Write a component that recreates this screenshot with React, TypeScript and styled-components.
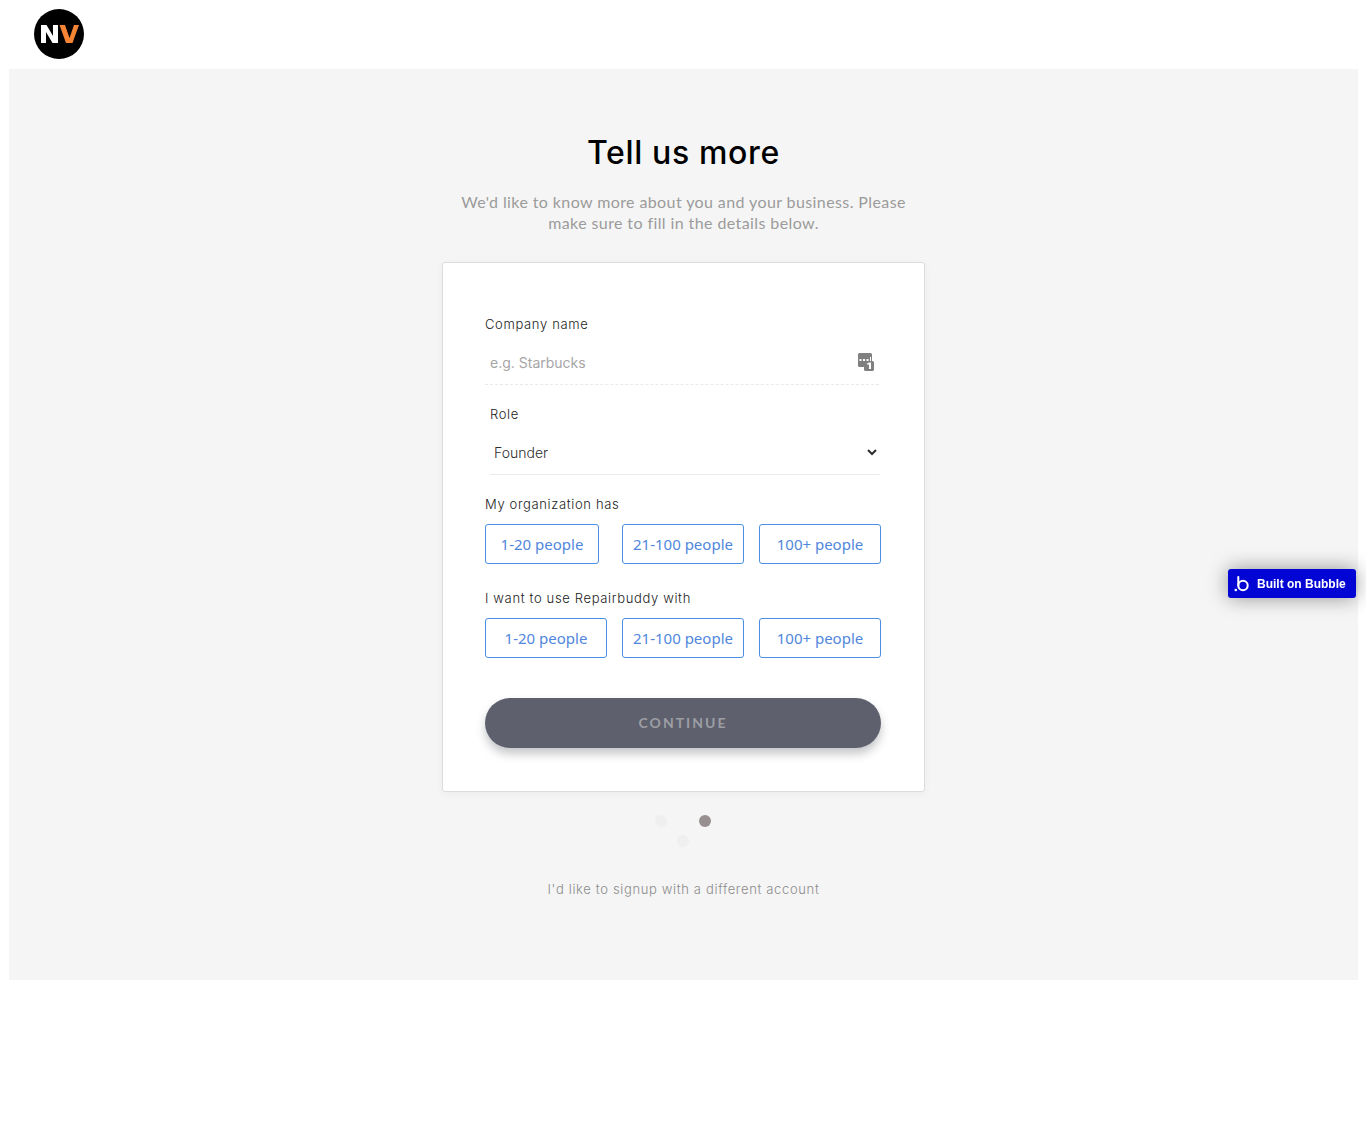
import React, { useState } from "react";
import styled, { createGlobalStyle } from "styled-components";

const GlobalStyle = createGlobalStyle`
  * { box-sizing: border-box; }
  body { margin: 0; background: #fff; font-family: Inter, "Liberation Sans", sans-serif; }
  button, input, select { font-family: inherit; }
`;

const Page = styled.div`
  padding: 0 8px 0 9px;
`;

const Header = styled.header`
  display: flex;
  align-items: flex-start;
  height: 69px;
  padding: 9px 25px;
`;

const HomeLink = styled.a`
  display: block;
  height: 50px;
`;

const Main = styled.main`
  display: flex;
  flex-direction: column;
  align-items: center;
  padding: 64px 16px 81px;
  background: #f5f5f5;
`;

const Title = styled.h1`
  margin: 0;
  font-size: 32px;
  line-height: 40px;
  font-weight: 500;
  letter-spacing: 0.02em;
  color: #000;
`;

const Intro = styled.p`
  width: 100%;
  max-width: 483px;
  margin: 18px 0 29px;
  padding: 0 12px;
  font-family: Lato, sans-serif;
  font-size: 16px;
  line-height: 21px;
  letter-spacing: 0.025em;
  text-align: center;
  color: #9b9b9b;
`;

const Card = styled.form`
  display: flex;
  flex-direction: column;
  width: 100%;
  max-width: 483px;
  padding: 51px 43px 43px 42px;
  background: #fff;
  border: 1px solid #dcdcdc;
  border-radius: 3px;
  box-shadow: 0 2px 10px rgba(0, 0, 0, 0.04);
`;

const Field = styled.div<{ $inset?: boolean }>`
  display: flex;
  flex-direction: column;
  height: 90px;
  padding-left: ${(p) => (p.$inset ? 5 : 0)}px;
  padding-right: ${(p) => (p.$inset ? 1 : 2)}px;
`;

const labelText = `
  font-size: 13px;
  line-height: 20px;
  font-weight: 300;
  letter-spacing: 0.05em;
  color: #1c1c1c;
`;

const Label = styled.label`
  ${labelText}
`;

const Control = styled.div<{ $dashed?: boolean }>`
  display: flex;
  align-items: center;
  height: 44px;
  margin-top: 7px;
  padding-right: ${(p) => (p.$dashed ? 5 : 0)}px;
  border-bottom: 1px ${(p) => (p.$dashed ? "dashed" : "solid")} #e9e9e9;
`;

const TextInput = styled.input`
  flex: 1;
  min-width: 0;
  height: 100%;
  padding: 0 5px;
  border: 0;
  outline: 0;
  background: transparent;
  font-size: 14px;
  color: #4a4a4a;
  &::placeholder { color: #a6a6a6; opacity: 1; }
`;

const Select = styled.select`
  width: 100%;
  height: 100%;
  padding: 0;
  border: 0;
  outline: 0;
  background: transparent;
  font-size: 14px;
  font-weight: 300;
  color: #2e2e2e;
`;

const Group = styled.fieldset`
  min-width: 0;
  height: 94px;
  margin: 0;
  padding: 0;
  border: 0;
`;

const Legend = styled.legend`
  padding: 0;
  ${labelText}
`;

const Choices = styled.div`
  display: grid;
  grid-template-columns: repeat(3, 1fr);
  gap: 15px;
  padding-top: 10px;
`;

const Choice = styled.button<{ $narrow?: boolean }>`
  height: 40px;
  margin-right: ${(p) => (p.$narrow ? 8 : 0)}px;
  padding: 0;
  border: 1px solid #4a8fe2;
  border-radius: 3px;
  background: #fff;
  color: #5087dc;
  font-family: "Noto Sans", sans-serif;
  font-size: 15px;
  white-space: nowrap;
  cursor: pointer;
`;

const Continue = styled.button`
  height: 50px;
  margin-top: 16px;
  padding: 0 0 2px;
  border: 0;
  border-radius: 25px;
  background: #5e606d;
  box-shadow: 0 6px 10px rgba(50, 55, 65, 0.28);
  color: #9c9ea4;
  font-family: Lato, sans-serif;
  font-size: 14px;
  font-weight: 700;
  letter-spacing: 2px;
`;

const Steps = styled.div`
  display: flex;
  align-items: flex-start;
  gap: 10px;
  margin-top: 23px;
  padding-right: 2px;
`;

const Step = styled.span<{ $active?: boolean; $low?: boolean }>`
  width: 12px;
  height: 12px;
  margin-top: ${(p) => (p.$low ? 20 : 0)}px;
  border-radius: 50%;
  background: ${(p) => (p.$active ? "#989090" : "#efefef")};
`;

const AccountLink = styled.a`
  margin-top: 32px;
  font-size: 13px;
  line-height: 20px;
  font-weight: 300;
  letter-spacing: 0.05em;
  text-decoration: none;
  color: #8c8c8c;
`;

const BubbleBadge = styled.a`
  position: fixed;
  top: 569px;
  right: 10px;
  display: flex;
  align-items: center;
  gap: 7px;
  width: 128px;
  height: 29px;
  padding-left: 6px;
  border-radius: 3px;
  background: #0205d3;
  box-shadow: 0 0 20px rgba(0, 0, 0, 0.4);
  color: #fff;
  font: bold 12px "Liberation Sans", sans-serif;
  text-decoration: none;
  white-space: nowrap;
`;

const Logo = () => (
  <svg width="50" height="50" viewBox="0 0 50 50" role="img" aria-label="NV">
    <circle cx="25" cy="25" r="25" fill="#000" />
    <path d="M7 34V16h5.500l6.500 11V16h5v18h-5.500L12 23v11z" fill="#fff" />
    <path d="M25.500 16h5.500l4.500 13L40 16h5l-6.500 18h-6.500z" fill="#f58435" />
  </svg>
);

const PasswordIcon = () => (
  <svg width="16" height="20" viewBox="0 0 16 20" aria-hidden="true">
    <path d="M1.500 0h11Q14 0 14 1.500V8h.500Q16 8 16 9.500v7q0 1.500-1.500 1.500h-7Q6 18 6 16.500V14H1.500Q0 14 0 12.500v-11Q0 0 1.500 0z" fill="#808080" />
    <path d="M1.500 6h2v2h-2zM5 6h2v2H5zM8.500 6h2v2h-2zM12 4h1v4h-1z" fill="#fff" />
    <path d="M9 11.500V10.500L11 9.500h2V16h-2v-4.500z" fill="#fff" />
  </svg>
);

const BubbleIcon = () => (
  <svg width="16" height="18" viewBox="0 0 16 18" aria-hidden="true">
    <circle cx="1.800" cy="15" r="1.300" fill="#fff" />
    <circle cx="9" cy="10.500" r="4.700" fill="none" stroke="#fff" strokeWidth="2" />
    <path d="M4.300 2v8.500" fill="none" stroke="#fff" strokeWidth="2" strokeLinecap="round" />
  </svg>
);

const sizes = ["1-20 people", "21-100 people", "100+ people"];

function SizeGroup({ title, compact }: { title: string; compact?: boolean }) {
  return (
    <Group>
      <Legend>{title}</Legend>
      <Choices>
        {sizes.map((size, i) => (
          <Choice key={size} type="button" $narrow={compact && i === 0}>
            {size}
          </Choice>
        ))}
      </Choices>
    </Group>
  );
}

export default function App() {
  const [company, setCompany] = useState("");
  return (
    <>
      <GlobalStyle />
      <Page>
        <Header>
          <HomeLink href="#"><Logo /></HomeLink>
        </Header>
        <Main>
          <Title>Tell us more</Title>
          <Intro>
            We'd like to know more about you and your business. Please make sure to fill in the details below.
          </Intro>
          <Card onSubmit={(e) => e.preventDefault()}>
            <Field>
              <Label htmlFor="company">Company name</Label>
              <Control $dashed>
                <TextInput
                  id="company"
                  placeholder="e.g. Starbucks"
                  value={company}
                  onChange={(e) => setCompany(e.target.value)}
                />
                <PasswordIcon />
              </Control>
            </Field>
            <Field $inset>
              <Label htmlFor="role">Role</Label>
              <Control>
                <Select id="role" defaultValue="Founder">
                  <option>Founder</option>
                </Select>
              </Control>
            </Field>
            <SizeGroup title="My organization has" compact />
            <SizeGroup title="I want to use Repairbuddy with" />
            <Continue type="submit">CONTINUE</Continue>
          </Card>
          <Steps>
            <Step />
            <Step $low />
            <Step $active />
          </Steps>
          <AccountLink href="#">I'd like to signup with a different account</AccountLink>
        </Main>
      </Page>
      <BubbleBadge href="#">
        <BubbleIcon />
        Built on Bubble
      </BubbleBadge>
    </>
  );
}
